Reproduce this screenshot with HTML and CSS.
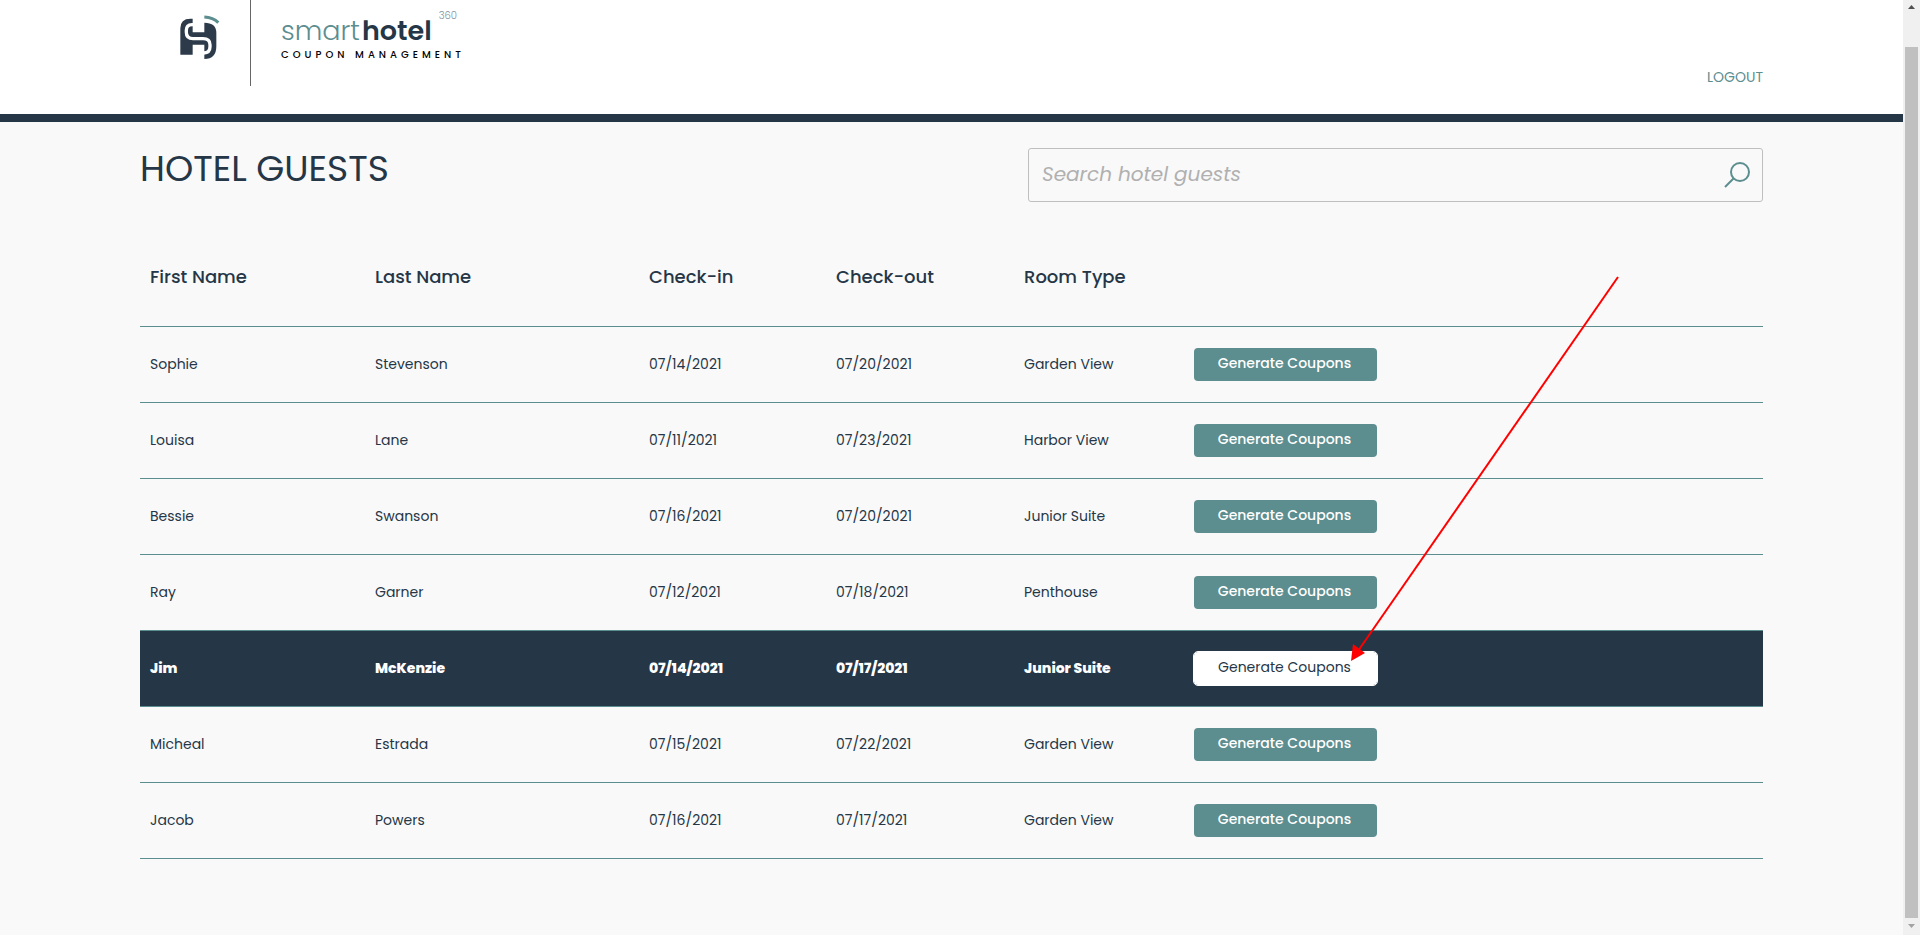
FILE: index.html
```html
<!DOCTYPE html>
<html lang="en">
<head>
<meta charset="utf-8">
<title>SmartHotel360 Coupon Management</title>
<link rel="stylesheet" href="styles.css">
</head>
<body>
<div class="page">
  <header class="site-header">
    <div class="brand">
      <svg class="brand-mark" viewBox="0 0 129 141" aria-hidden="true">
        <path fill="#2c3a4a" d="M10 125V46Q10 17 40 17H47V58H82V29Q118 29 118 60V100Q118 138 82 138V95H47V125Z"/>
        <path fill="none" stroke="#fff" stroke-width="10" d="M49 35H45Q28 36 28 52V58Q28 77 48 77H78Q99 77 99 95V101Q99 119 80 120"/>
        <path fill="none" stroke="#5c8d8f" stroke-width="9" d="M82 12Q108 13 124 29"/>
      </svg>
      <div class="brand-text">
        <div class="brand-name"><span class="smart">smart</span><span class="hotel">hotel</span><span class="num">360</span></div>
        <div class="brand-sub">COUPON MANAGEMENT</div>
      </div>
    </div>
    <a class="logout" href="#">LOGOUT</a>
  </header>
  <main class="content">
    <div class="title-row">
      <h1 class="title">HOTEL GUESTS</h1>
      <form class="search">
        <input class="search-input" type="search" placeholder="Search hotel guests" aria-label="Search hotel guests">
        <button class="search-button" type="button" aria-label="Search">
          <svg class="search-icon" viewBox="0 0 27 27" aria-hidden="true"><g fill="none" stroke="#5c8d8f" stroke-width="2"><circle cx="16" cy="11" r="9"/><path d="M10 17L1 26"/></g></svg>
        </button>
      </form>
    </div>
    <table class="guests">
      <colgroup><col class="c-first"><col class="c-last"><col class="c-in"><col class="c-out"><col class="c-room"><col></colgroup>
      <thead><tr><th>First Name</th><th>Last Name</th><th>Check-in</th><th>Check-out</th><th>Room Type</th><td></td></tr></thead>
      <tbody>
        <tr><td>Sophie</td><td>Stevenson</td><td>07/14/2021</td><td>07/20/2021</td><td>Garden View</td><td class="action"><button class="generate" type="button">Generate Coupons</button></td></tr>
        <tr><td>Louisa</td><td>Lane</td><td>07/11/2021</td><td>07/23/2021</td><td>Harbor View</td><td class="action"><button class="generate" type="button">Generate Coupons</button></td></tr>
        <tr><td>Bessie</td><td>Swanson</td><td>07/16/2021</td><td>07/20/2021</td><td>Junior Suite</td><td class="action"><button class="generate" type="button">Generate Coupons</button></td></tr>
        <tr><td>Ray</td><td>Garner</td><td>07/12/2021</td><td>07/18/2021</td><td>Penthouse</td><td class="action"><button class="generate" type="button">Generate Coupons</button></td></tr>
        <tr class="active"><td>Jim</td><td>McKenzie</td><td>07/14/2021</td><td>07/17/2021</td><td>Junior Suite</td><td class="action"><button class="generate" type="button">Generate Coupons</button></td></tr>
        <tr><td>Micheal</td><td>Estrada</td><td>07/15/2021</td><td>07/22/2021</td><td>Garden View</td><td class="action"><button class="generate" type="button">Generate Coupons</button></td></tr>
        <tr><td>Jacob</td><td>Powers</td><td>07/16/2021</td><td>07/17/2021</td><td>Garden View</td><td class="action"><button class="generate" type="button">Generate Coupons</button></td></tr>
      </tbody>
    </table>
  </main>
  <svg class="pointer" viewBox="0 0 270 386" aria-hidden="true"><path d="M268 1L8 375" stroke="#f00" stroke-width="2"/><path d="M1 385L3 368L15 377Z" fill="#f00"/></svg>
</div>
<div class="scrollbar" aria-hidden="true">
  <svg class="scroll-arrow" viewBox="0 0 7 4"><path d="M0 4L3.500 0L7 4Z" fill="#505050"/></svg>
  <div class="scroll-thumb"></div>
  <svg class="scroll-arrow" viewBox="0 0 7 4"><path d="M0 0L3.500 4L7 0Z" fill="#a3a3a3"/></svg>
</div>
</body>
</html>
```
FILE: styles.css
```css
* { box-sizing: border-box; }

body {
  margin: 0;
  display: flex;
  min-height: 100vh;
  background: #f9f9f9;
  color: #253647;
  font-family: Poppins, Inter, sans-serif;
  font-size: 14px;
}

.page { position: relative; flex: 1; }

.site-header {
  display: flex;
  justify-content: space-between;
  align-items: flex-start;
  padding: 0 140px 27px;
  background: #fff;
  border-bottom: 8px solid #253647;
}

.brand { display: flex; }

.brand-mark {
  width: 43px;
  height: 47px;
  margin: 13px 30px 0 37px;
}

.brand-text {
  height: 86px;
  padding: 11px 0 0 30px;
  border-left: 1px solid #666;
}

.brand-name {
  display: flex;
  align-items: flex-start;
  font-size: 27px;
  line-height: 40px;
}

.smart { color: #5c8d8f; font-weight: 300; }
.hotel { margin-left: 2px; font-weight: 600; }

.num {
  margin-left: 7px;
  color: #7c929c;
  font-size: 10px;
  font-weight: 300;
  line-height: 10px;
}

.brand-sub {
  color: #000;
  font-size: 10px;
  font-weight: 500;
  line-height: 8px;
  letter-spacing: 4px;
}

.logout {
  padding-top: 67px;
  color: #5c8d8f;
  line-height: 20px;
  text-decoration: none;
}

.content { padding: 26px 140px 76px; }

.title-row {
  display: flex;
  justify-content: space-between;
  align-items: flex-start;
}

.title {
  margin: 0;
  font-size: 36px;
  font-weight: 400;
  line-height: 42px;
}

.search {
  display: flex;
  align-items: center;
  width: 735px;
  height: 54px;
  padding: 0 11px 2px 13px;
  border: 1px solid #bfbfbf;
  border-radius: 3px;
}

.search-input {
  flex: 1;
  padding: 0;
  border: 0;
  outline: 0;
  background: none;
  color: inherit;
  font: italic 400 20px Poppins, Inter, sans-serif;
}

.search-input::placeholder { color: #b0b0b0; }

.search-button {
  padding: 0;
  border: 0;
  background: none;
}

.search-icon { display: block; width: 27px; height: 27px; }

.guests {
  width: 100%;
  margin-top: 25px;
  border-collapse: separate;
  border-spacing: 0;
  table-layout: fixed;
}

.c-first { width: 225px; }
.c-last { width: 274px; }
.c-in { width: 187px; }
.c-out { width: 188px; }
.c-room { width: 170px; }

.guests th,
.guests td {
  height: 76px;
  padding: 0 10px 2px;
  border-bottom: 1px solid #5c8d8f;
  text-align: left;
  line-height: 20px;
}

.guests thead th,
.guests thead td { height: 100px; padding-bottom: 0; }

.guests .action { padding-bottom: 0; }

.guests th {
  font-size: 18px;
  font-weight: 500;
}

.generate {
  display: block;
  width: 183px;
  height: 33px;
  padding: 0 2px 2px 0;
  border: 0;
  border-radius: 4px;
  background: #5c8d8f;
  color: #fff;
  font: 500 14px Poppins, Inter, sans-serif;
}

.active {
  background: #253647;
  color: #fff;
  font-weight: 800;
}

.active .generate {
  outline: 1px solid #fff;
  background: #fff;
  color: #253647;
  font-weight: 400;
}

.pointer {
  position: absolute;
  left: 1350px;
  top: 276px;
  width: 270px;
  height: 386px;
  pointer-events: none;
}

.scrollbar {
  display: flex;
  flex-direction: column;
  align-items: center;
  width: 17px;
  padding: 5px 0 7px;
  background: #f0f0f0;
}

.scroll-arrow { width: 7px; height: 4px; }

.scroll-thumb {
  flex: 1;
  width: 13px;
  margin: 38px 0 6px;
  background: #c0c0c0;
}
```
